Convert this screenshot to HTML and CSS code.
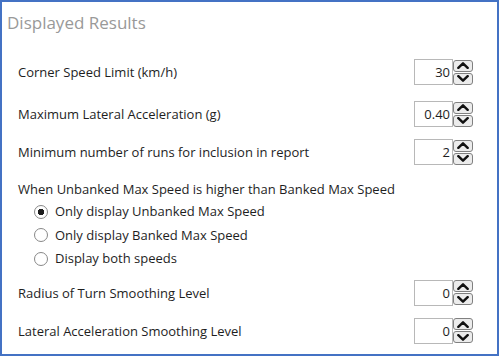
FILE: index.html
```html
<!DOCTYPE html>
<html lang="en">
<head>
    <meta charset="UTF-8">
    <title>Displayed Results</title>
    <link rel="stylesheet" href="styles.css">
</head>
<body>
    <div class="panel">
        <h1 class="panel-title">Displayed Results</h1>

        <div class="field row-1">
            <span class="label">Corner Speed Limit (km/h)</span>
            <div class="spin">
                <div class="spin-box">30</div>
                <div class="spin-btns">
                    <span class="btn"><svg viewBox="0 0 10 6"><polyline points="1,5 5,1.2 9,5"/></svg></span>
                    <span class="btn"><svg viewBox="0 0 10 6"><polyline points="1,1 5,4.8 9,1"/></svg></span>
                </div>
            </div>
        </div>
        <div class="field row-2">
            <span class="label">Maximum Lateral Acceleration (g)</span>
            <div class="spin">
                <div class="spin-box">0.40</div>
                <div class="spin-btns">
                    <span class="btn"><svg viewBox="0 0 10 6"><polyline points="1,5 5,1.2 9,5"/></svg></span>
                    <span class="btn"><svg viewBox="0 0 10 6"><polyline points="1,1 5,4.8 9,1"/></svg></span>
                </div>
            </div>
        </div>
        <div class="field row-3">
            <span class="label">Minimum number of runs for inclusion in report</span>
            <div class="spin">
                <div class="spin-box">2</div>
                <div class="spin-btns">
                    <span class="btn"><svg viewBox="0 0 10 6"><polyline points="1,5 5,1.2 9,5"/></svg></span>
                    <span class="btn"><svg viewBox="0 0 10 6"><polyline points="1,1 5,4.8 9,1"/></svg></span>
                </div>
            </div>
        </div>

        <div class="group">
            <div class="group-label">When Unbanked Max Speed is higher than Banked Max Speed</div>
            <div class="radio checked">Only display Unbanked Max Speed</div>
            <div class="radio">Only display Banked Max Speed</div>
            <div class="radio">Display both speeds</div>
        </div>

        <div class="field row-5">
            <span class="label">Radius of Turn Smoothing Level</span>
            <div class="spin">
                <div class="spin-box">0</div>
                <div class="spin-btns">
                    <span class="btn"><svg viewBox="0 0 10 6"><polyline points="1,5 5,1.2 9,5"/></svg></span>
                    <span class="btn"><svg viewBox="0 0 10 6"><polyline points="1,1 5,4.8 9,1"/></svg></span>
                </div>
            </div>
        </div>
        <div class="field row-6">
            <span class="label">Lateral Acceleration Smoothing Level</span>
            <div class="spin">
                <div class="spin-box">0</div>
                <div class="spin-btns">
                    <span class="btn"><svg viewBox="0 0 10 6"><polyline points="1,5 5,1.2 9,5"/></svg></span>
                    <span class="btn"><svg viewBox="0 0 10 6"><polyline points="1,1 5,4.8 9,1"/></svg></span>
                </div>
            </div>
        </div>
    </div>
</body>
</html>
```

FILE: styles.css
```css
* {
    margin: 0;
    padding: 0;
    box-sizing: border-box;
}

body {
    background: #ffffff;
    font-family: 'Open Sans', 'Noto Sans', sans-serif;
    font-size: 13px;
    color: #1e1e1e;
}

.panel {
    width: 499px;
    height: 356px;
    border: 2px solid #4472c4;
    padding: 0 24px 0 16px;
    background: #fff;
}

.panel-title {
    font-size: 17px;
    font-weight: normal;
    color: #999;
    margin: 9px 0 0 -11px;
    line-height: 24px;
}

/* rows with a spin box on the right */
.field {
    display: flex;
    justify-content: space-between;
    align-items: center;
    height: 26px;
}
.row-1 { margin-top: 24px; }
.row-2 { margin-top: 16px; }
.row-3 { margin-top: 12px; }
.row-5 { margin-top: 9px; }
.row-6 { margin-top: 12px; }

.spin { display: flex; align-items: center; }
.spin-box {
    width: 39px;
    height: 26px;
    border: 1px solid #b8b8b8;
    text-align: right;
    padding-right: 2px;
    line-height: 24px;
}
.spin-btns { display: flex; flex-direction: column; gap: 1px; }
.btn {
    display: flex;
    align-items: center;
    justify-content: center;
    width: 20px;
    height: 12px;
    border: 1px solid #808080;
    border-radius: 3px;
    background: #ececec;
}
.btn svg {
    width: 12px;
    height: 7px;
    fill: none;
    stroke: #111;
    stroke-width: 2.1;
    stroke-linecap: round;
    stroke-linejoin: round;
}

/* radio group */
.group { margin-top: 13px; }
.group-label { line-height: 22px; }
.radio {
    display: flex;
    align-items: center;
    line-height: 23.5px;
    padding-left: 16px;
}
.radio::before {
    content: '';
    width: 12px;
    height: 12px;
    border: 1px solid #888;
    border-radius: 50%;
    margin-right: 7px;
}
.radio.checked::before {
    background: radial-gradient(circle, #1e1e1e 0 3px, #fff 3.5px);
}
```
